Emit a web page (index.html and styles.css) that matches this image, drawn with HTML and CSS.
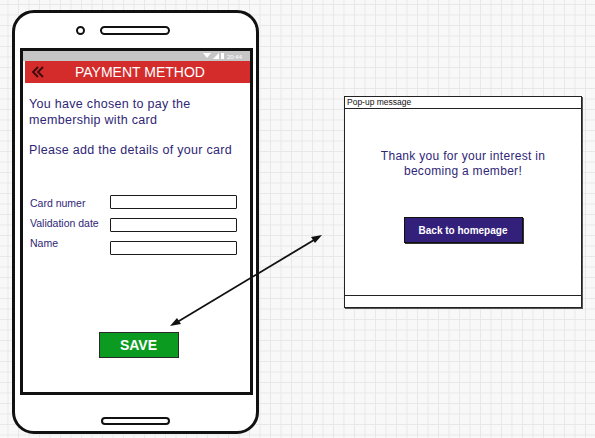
FILE: index.html
```html
<!DOCTYPE html>
<html lang="en">
<head>
    <meta charset="UTF-8">
    <meta name="viewport" content="width=device-width, initial-scale=1.0">
    <title>Payment method - mockup</title>
    <link rel="stylesheet" href="styles.css">
</head>
<body>
<div class="board">
    <div class="phone">
        <div class="speaker">
            <span class="camera"></span>
            <span class="slot"></span>
        </div>
        <div class="screen">
            <div class="status-bar">
                <svg width="46" height="8" viewBox="0 0 46 8">
                    <path d="M1 1 L9 1 L5 6 Z" fill="#fff"/>
                    <path d="M11 7 L17 1 L17 7 Z" fill="#fff"/>
                    <rect x="19" y="1" width="3" height="6" fill="#fff"/>
                    <text x="25" y="6.5" font-size="6" fill="#fff" font-family="Liberation Sans, sans-serif">20:44</text>
                </svg>
            </div>
            <div class="title-bar">
                <svg class="back" width="14" height="12" viewBox="0 0 14 12">
                    <path d="M7 1 L2 6 L7 11 M12 1 L7 6 L12 11" fill="none" stroke="#3a0d0d" stroke-width="1.8"/>
                </svg>
                <h1>PAYMENT METHOD</h1>
            </div>
            <div class="content">
                <p class="intro">You have chosen to pay the<br>membership with card</p>
                <p class="intro">Please add the details of your card</p>
                <div class="card-form">
                    <div class="labels">
                        <label for="card-number">Card numer</label>
                        <label for="card-date">Validation date</label>
                        <label for="card-name">Name</label>
                    </div>
                    <div class="inputs">
                        <input type="text" id="card-number">
                        <input type="text" id="card-date">
                        <input type="text" id="card-name">
                    </div>
                </div>
                <button class="save">SAVE</button>
            </div>
        </div>
        <div class="home-button"></div>
    </div>

    <div class="popup">
        <div class="popup-title">Pop-up message</div>
        <div class="popup-body">
            <p>Thank you for your interest in<br>becoming a member!</p>
            <button class="back-home">Back to homepage</button>
        </div>
        <div class="popup-footer"></div>
    </div>

    <svg class="link-arrow" width="595" height="438" viewBox="0 0 595 438">
        <line x1="174" y1="324" x2="319" y2="237" stroke="#111" stroke-width="1.8"/>
        <path d="M322 235 L311 237 L315 243 Z" fill="#111"/>
        <path d="M170 326 L181 324 L177 318 Z" fill="#111"/>
    </svg>
</div>
</body>
</html>
```

FILE: styles.css
```css
body {
    margin: 0;
    font-family: "Liberation Sans", Arial, sans-serif;
    background-color: #f8f8f8;
    background-image:
        linear-gradient(to right, #e8e8e8 1px, transparent 1px),
        linear-gradient(to bottom, #e8e8e8 1px, transparent 1px);
    background-size: 10.5px 10.5px;
    background-position: 7.5px 4px;
}
.board {
    position: relative;
    width: 595px;
    height: 438px;
    display: flex;
    align-items: flex-start;
    padding: 10px 0 0 12px;
    box-sizing: border-box;
}
.phone {
    width: 247px;
    height: 424px;
    box-sizing: border-box;
    border: 3px solid #111;
    border-radius: 22px;
    background: #fff;
    display: flex;
    flex-direction: column;
}
.speaker {
    height: 35px;
    display: flex;
    align-items: center;
    gap: 15px;
    padding-left: 61px;
}
.camera {
    width: 5px;
    height: 5px;
    border: 2px solid #111;
    border-radius: 50%;
}
.slot {
    width: 66px;
    height: 5px;
    border: 2px solid #111;
    border-radius: 5px;
}
.screen {
    margin: 0 3px 0 5px;
    height: 347px;
    box-sizing: border-box;
    border: 3px solid #111;
    display: flex;
    flex-direction: column;
}
.status-bar {
    height: 10px;
    background: #c6c6c6;
    display: flex;
    justify-content: flex-end;
    align-items: center;
    padding-right: 2px;
}
.title-bar {
    height: 22px;
    margin-left: 2px;
    background: #d42b2b;
    display: flex;
    align-items: center;
}
.title-bar .back {
    margin-left: 6px;
}
.title-bar h1 {
    margin: 0 0 0 30px;
    font-size: 14px;
    font-weight: normal;
    color: #fff;
}
.content {
    flex: 1;
    padding: 13px 6px 0 6px;
    display: flex;
    flex-direction: column;
}
.intro {
    margin: 0 0 14px 0;
    font-size: 12.5px;
    line-height: 16px;
    color: #2f2676;
    letter-spacing: 0.3px;
}
.card-form {
    margin-top: 23px;
    display: flex;
}
.labels {
    width: 80px;
    display: flex;
    flex-direction: column;
    gap: 6px;
    padding: 1px 0 0 1px;
}
.labels label {
    font-size: 10.5px;
    line-height: 14px;
    color: #2f2676;
}
.inputs {
    display: flex;
    flex-direction: column;
    gap: 9px;
}
.inputs input {
    width: 127px;
    height: 14px;
    box-sizing: border-box;
    margin: 0;
    padding: 0;
    border: 1.5px solid #1a1a1a;
    border-radius: 1px;
    background: #fff;
}
.save {
    align-self: center;
    margin: 77px 0 0 4px;
    width: 80px;
    height: 26px;
    background: #0c9b21;
    border: 1.5px solid #2a2a2a;
    color: #fff;
    font-family: "Liberation Sans", Arial, sans-serif;
    font-size: 14px;
    font-weight: bold;
    padding: 0;
}
.home-button {
    align-self: flex-start;
    margin: 22px 0 0 86px;
    width: 65px;
    height: 4px;
    border: 2px solid #111;
    border-radius: 6px;
}
.popup {
    margin: 86px 0 0 85px;
    width: 238px;
    height: 212px;
    box-sizing: border-box;
    border: 1.5px solid #222;
    box-shadow: 1px 1px 0 #555;
    background: #fff;
    display: flex;
    flex-direction: column;
}
.popup-title {
    height: 11px;
    border-bottom: 1.5px solid #222;
    font-size: 8.5px;
    line-height: 11px;
    padding-left: 2px;
    color: #111;
}
.popup-body {
    flex: 1;
    display: flex;
    flex-direction: column;
    align-items: center;
    padding-top: 40px;
}
.popup-body p {
    margin: 0;
    text-align: center;
    font-size: 12px;
    line-height: 15px;
    color: #2f2676;
    letter-spacing: 0.3px;
}
.back-home {
    margin-top: 38px;
    width: 119px;
    height: 26px;
    background: #33207a;
    border: 1px solid #111;
    box-shadow: 1px 1px 0 #333;
    color: #fff;
    font-family: "Liberation Sans", Arial, sans-serif;
    font-size: 10px;
    font-weight: bold;
    padding: 0;
}
.popup-footer {
    height: 11px;
    border-top: 1.5px solid #222;
}
.link-arrow {
    position: absolute;
    left: 0;
    top: 0;
    pointer-events: none;
}
```
